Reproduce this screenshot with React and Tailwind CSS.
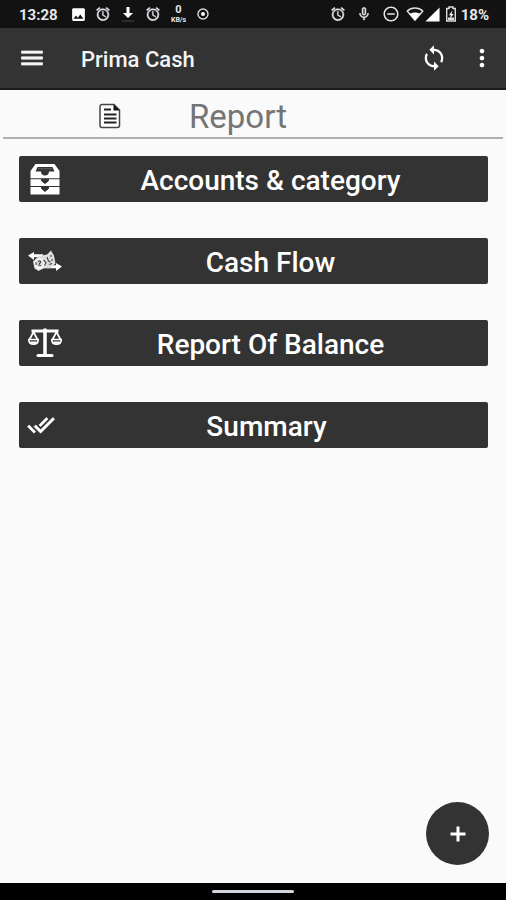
import { useState } from "react";
import {
  MdAlarm,
  MdDoneAll,
  MdImage,
  MdMenu,
  MdMicNone,
  MdMoreVert,
  MdRemoveCircleOutline,
  MdSignalCellular4Bar,
  MdSync,
} from "react-icons/md";

// the first path of a Material icon is its empty bounding box, keep it unstroked
const BOLD_ICON = "stroke-current [stroke-width:0.6] [&>path:first-child]:stroke-none";

function DownloadIcon() {
  return (
    <svg viewBox="0 0 14 18" className="w-[14px] h-[18px]" aria-hidden>
      <path d="M5.5 2h3v6H12l-5 5-5-5h3.5z" fill="#fff" />
      <path d="M1 16h12" stroke="#444" strokeWidth="1" />
    </svg>
  );
}

function TargetIcon() {
  return (
    <svg viewBox="0 0 14 14" className="w-[14px] h-[14px]" aria-hidden>
      <circle cx="7" cy="7" r="5" fill="none" stroke="#ddd" strokeWidth="1.4" />
      <circle cx="7" cy="7" r="2" fill="#fff" />
    </svg>
  );
}

function WifiIcon() {
  return (
    <svg viewBox="0 0 18 16" className="w-[18px] h-[16px]" aria-hidden>
      <path d="M1.2 5C5.5 1 12.5 1 16.8 5L9 14.2z" fill="none" stroke="#ddd" strokeWidth="1.4" strokeLinejoin="round" />
      <path d="M3.5 8C6.5 6 11.5 6 14.5 8L9 14.2z" fill="#fff" />
    </svg>
  );
}

function BatteryIcon() {
  return (
    <svg viewBox="0 0 12 16" className="w-[12px] h-[16px]" aria-hidden>
      <path d="M4 1h4v1.5h2.3V15H1.7V2.5H4z" fill="none" stroke="#ddd" strokeWidth="1.4" />
      <path d="M7.5 4.5 3.8 9.3h2L4.8 13l3.8-5h-2z" fill="#fff" />
      <path d="M3 11.5h6V14H3z" fill="#ddd" />
    </svg>
  );
}

function PlusIcon() {
  return (
    <svg viewBox="0 0 16 16" className="w-4 h-4" aria-hidden>
      <path d="M8 .5v15M.5 8h15" stroke="#fff" strokeWidth="3" />
    </svg>
  );
}

function ReportIcon() {
  return (
    <svg viewBox="0 0 22 26" className="w-[22px] h-[26px]" aria-hidden>
      <path d="M3 1.5h12L20.5 7v15.500a2 2 0 0 1-2 2H3a2 2 0 0 1-2-2v-19a2 2 0 0 1 2-2z" fill="#fff" stroke="#444" strokeWidth="1.5" />
      <path d="M14.5 1.5v6h6z" fill="#111" />
      <path d="M5 6.5h7M5 11.5h12.5M5 15.5h12.5M5 19.5h12.5" stroke="#222" strokeWidth="2" />
    </svg>
  );
}

function DrawersIcon() {
  return (
    <svg viewBox="0 0 30 32" className="w-[30px] h-[32px]" aria-hidden>
      <path d="M5.5 1h19l5 7v7.3H.5V8z" fill="#fff" />
      <path d="M7.5 4h15l2 4.500H19c0 2.500-1.500 4-4 4s-4-1.500-4-4H5.500z" fill="#333" />
      <path d="M8 5.800h14" stroke="#666" strokeWidth="1" />
      <path d="M.5 16.300h29v6.700H.5zM.5 24h29v7.500H.5z" fill="#fff" />
      <path d="M11.500 16.300h7v1.500L15 20.500l-3.500-2.700zM11.500 24h7v1.500L15 28.500l-3.500-3z" fill="#333" stroke="#333" strokeLinejoin="round" />
    </svg>
  );
}

function CashFlowIcon() {
  return (
    <svg viewBox="0 0 36 24" className="w-[36px] h-[24px]" aria-hidden>
      <path d="M1 6.500 7 3v2.300h9v3H7V11z" fill="#fff" />
      <path d="M35 17.500 29 14v2.300h-9v3h9V22z" fill="#fff" />
      <path d="M6 12.500 12 7l8-1.500L24 1.500l3 5 1.500 8-5 4.500-7 .500-5 2.500-4-2.500z" fill="#ddd" />
      <circle cx="12.500" cy="14.500" r="4.500" fill="none" stroke="#fff" strokeWidth="1.500" />
      <path d="M11 12.500c2-1.500 3.500 0 2 1.500s-2 2.500 1 2.500M16.500 11l2.500 2.500-1.500 3M20 8l1.500 4 2 1M24 6v2M25 10v2M22 15.500l3-1M9 13v3" fill="none" stroke="#444" strokeWidth="1.100" />
    </svg>
  );
}

function ScalesIcon() {
  return (
    <svg viewBox="0 0 36 32" className="w-[36px] h-[32px]" fill="none" stroke="#fff" aria-hidden>
      <path d="M4.500 4h27" strokeWidth="3" />
      <path d="M18 1.500v27" strokeWidth="3.500" />
      <path d="M11 28.500h14" strokeWidth="3" strokeLinecap="round" />
      <path d="M6.500 5 2.500 12.500M6.500 5l4 7.500M29.500 5l-4 7.500M29.500 5l4 7.500" strokeWidth="1.700" />
      <path d="M1.800 12.500c0 3.300 2 4.700 4.700 4.700s4.700-1.400 4.700-4.700zM24.800 12.500c0 3.300 2 4.700 4.700 4.700s4.700-1.400 4.700-4.700z" strokeWidth="1.700" />
      <path d="M3.500 15.500h6M26.500 15.500h6" strokeWidth="2" />
    </svg>
  );
}

const REPORTS = [
  { id: "accounts", label: "Accounts & category", icon: <DrawersIcon />, iconBox: "w-9" },
  { id: "cash-flow", label: "Cash Flow", icon: <CashFlowIcon />, iconBox: "w-9" },
  { id: "balance", label: "Report Of Balance", icon: <ScalesIcon />, iconBox: "w-9" },
  { id: "summary", label: "Summary", icon: <MdDoneAll className={`w-7 h-7 ${BOLD_ICON}`} />, iconBox: "w-7" },
];

function StatusBar() {
  return (
    <div className="h-7 bg-[#121212] flex items-center justify-between pl-[19px] pr-[17px] text-gray-200">
      <div className="flex items-center">
        <span className="w-[51px] pt-0.5 text-[15px] leading-5 font-bold">13:28</span>
        <div className="flex items-center">
          <span className="w-[25px]"><MdImage className="w-[17px] h-[17px] text-white" /></span>
          <span className="w-[25px]"><MdAlarm className={`w-4 h-4 ${BOLD_ICON}`} /></span>
          <span className="w-[25px] pl-px"><DownloadIcon /></span>
          <span className="w-4"><MdAlarm className={`w-4 h-4 ${BOLD_ICON}`} /></span>
          <span className="w-[35px] flex flex-col items-center font-bold">
            <span className="text-[11px] leading-[13px]">0</span>
            <span className="text-[7px] leading-[9px]">KB/s</span>
          </span>
          <TargetIcon />
        </div>
      </div>
      <div className="flex items-center">
        <MdAlarm className={`w-4 h-4 mr-[10px] ${BOLD_ICON}`} />
        <MdMicNone className={`w-4 h-4 mr-[10px] ${BOLD_ICON}`} />
        <MdRemoveCircleOutline className="w-[18px] h-[18px] mr-1.5" />
        <WifiIcon />
        <MdSignalCellular4Bar className="w-[17px] h-[17px] text-white mr-1" />
        <BatteryIcon />
        <span className="ml-1 pt-0.5 text-[15px] leading-5 font-bold">18%</span>
      </div>
    </div>
  );
}

export default function App() {
  const [selected, setSelected] = useState(null);

  return (
    <div className="min-h-screen flex flex-col bg-[#fafafa] font-[Roboto,sans-serif]">
      <StatusBar />

      {/* App bar */}
      <header className="h-[62px] bg-[#333333] border-b-2 border-[#1a1a1a] flex items-center text-gray-100">
        <button type="button" aria-label="Menu" className="ml-[18px]">
          <MdMenu className={`w-7 h-7 ${BOLD_ICON}`} />
        </button>
        <h1 className="ml-[35px] pt-1 flex-1 text-[22px] leading-7 font-medium">Prima Cash</h1>
        <button type="button" aria-label="Sync" className="mr-5 text-white">
          <MdSync className="w-7 h-7" />
        </button>
        <button type="button" aria-label="More options" className="mr-[10px] text-white">
          <MdMoreVert className="w-7 h-7" />
        </button>
      </header>

      {/* Section title */}
      <div className="mx-[3px] h-[49px] border-b-2 border-[#b0b0b0] flex items-center pt-1 pl-24">
        <ReportIcon />
        <h2 className="ml-[68px] pt-0.5 text-[33px] leading-10 text-[#757575]">Report</h2>
      </div>

      <main className="flex-1 flex flex-col gap-9 pl-[19px] pr-[18px] pt-[17px]">
        {REPORTS.map((r) => (
          <button
            key={r.id}
            type="button"
            aria-pressed={selected === r.id}
            onClick={() => setSelected(r.id)}
            className="h-[46px] rounded-xs bg-[#333333] flex items-center pl-2 pr-[10px] text-white"
          >
            <span className={`${r.iconBox} shrink-0 flex justify-center`}>{r.icon}</span>
            <span className="flex-1 pt-1 text-[28px] leading-8 font-medium">{r.label}</span>
          </button>
        ))}
      </main>

      <div className="flex justify-end pr-[17px] pb-[18px]">
        <button
          type="button"
          aria-label="Add"
          className="w-[63px] h-[63px] rounded-full bg-[#333333] flex items-center justify-center"
        >
          <PlusIcon />
        </button>
      </div>

      {/* Gesture bar */}
      <div className="h-[17px] bg-black flex items-center justify-center">
        <div className="w-[82px] h-[3px] rounded-full bg-gray-300" />
      </div>
    </div>
  );
}
